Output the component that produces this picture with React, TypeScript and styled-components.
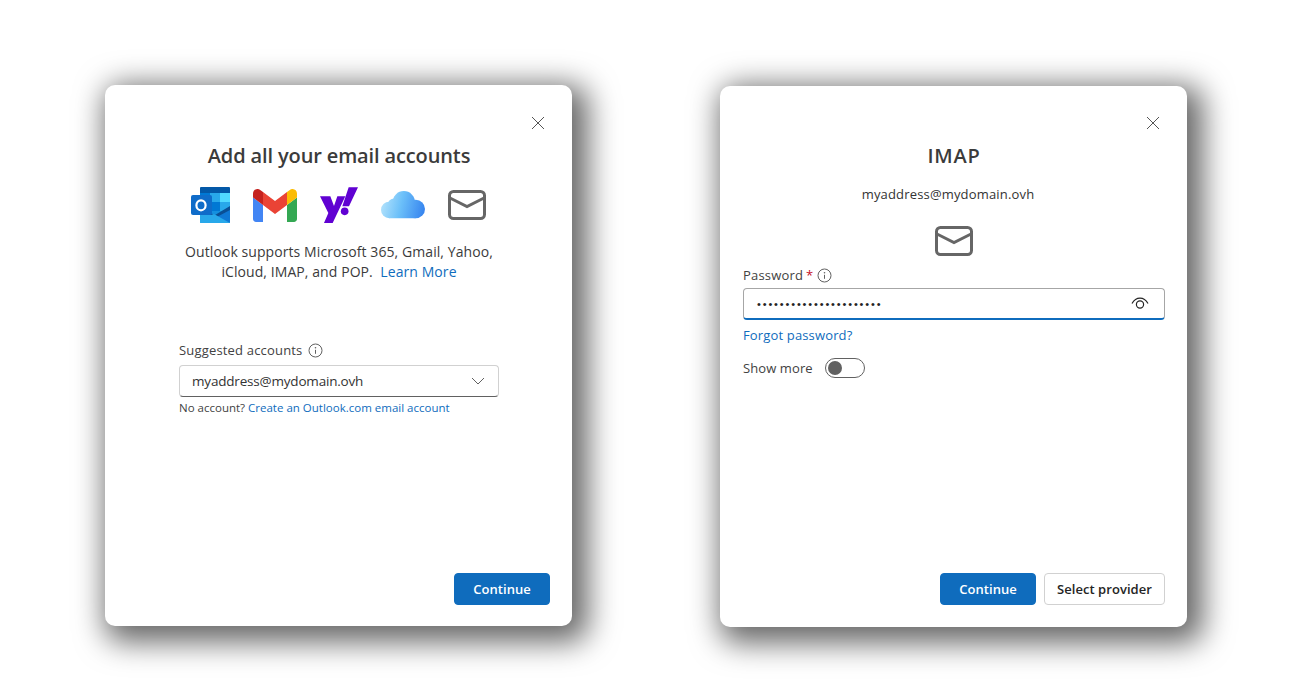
import styled, { createGlobalStyle } from 'styled-components'

const GlobalStyle = createGlobalStyle`
  html, body {
    margin: 0;
    padding: 0;
    background: #fff;
  }
  body {
    font-family: 'Open Sans', 'Noto Sans', sans-serif;
    color: #242424;
  }
`

const Page = styled.div`
  width: 1300px;
  height: 700px;
  overflow: hidden;
  display: flex;
  align-items: flex-start;
  gap: 148px;
  padding: 85px 0 0 105px;
  box-sizing: border-box;
`

const Card = styled.section<{ $offset?: number }>`
  position: relative;
  width: 467px;
  height: 541px;
  margin-top: ${(p) => p.$offset ?? 0}px;
  padding: 56px 22px 21px 23px;
  box-sizing: border-box;
  display: flex;
  flex-direction: column;
  background: #fff;
  border-radius: 10px;
  box-shadow: 8px 8px 30px 8px rgba(0, 0, 0, 0.6);
`

const CloseButton = styled.button<{ $top?: number }>`
  position: absolute;
  top: ${(p) => p.$top ?? 31}px;
  right: 27px;
  width: 14px;
  height: 14px;
  padding: 0;
  border: 0;
  background: none;
  display: flex;
  svg {
    display: block;
  }
`

const Title = styled.h2<{ $nudge?: number; $tracking?: number }>`
  margin: ${(p) => p.$nudge ?? 0}px 0 0;
  font-size: 20px;
  line-height: 28px;
  font-weight: 600;
  color: #3b3b3b;
  text-align: center;
  letter-spacing: ${(p) => p.$tracking ?? -0.13}px;
`

const LogoRow = styled.div`
  margin: 17px 0 0 62px;
  height: 36px;
  display: flex;
  align-items: center;
  gap: 23px;
`

const Blurb = styled.p`
  margin: 19px 0 0;
  font-size: 14px;
  line-height: 20px;
  letter-spacing: 0.08px;
  color: #3b3b3b;
  text-align: center;
`

const Link = styled.a<{ $small?: boolean }>`
  color: #0f6cbd;
  text-decoration: none;
  font-size: ${(p) => (p.$small ? '11.5px' : 'inherit')};
`

const Form = styled.div`
  width: 320px;
  margin: 58px 0 0 51px;
`

const LabelRow = styled.div<{ $gap?: number }>`
  display: flex;
  align-items: center;
  gap: ${(p) => p.$gap ?? 5}px;
  height: 20px;
  font-size: 13px;
  letter-spacing: 0.18px;
  color: #424242;
`

const Required = styled.span`
  color: #c50f1f;
  margin-right: 1px;
`

const SelectBox = styled.div`
  margin-top: 5px;
  height: 32px;
  padding: 0 13px 0 12px;
  box-sizing: border-box;
  display: flex;
  align-items: center;
  justify-content: space-between;
  border: 1px solid #d1d1d1;
  border-bottom-color: #616161;
  border-radius: 4px;
  font-size: 13.5px;
  letter-spacing: -0.19px;
  color: #333;
`

const Hint = styled.div`
  margin-top: 4px;
  font-size: 11.5px;
  line-height: 14px;
  color: #424242;
`

const Address = styled.div`
  margin-top: 14px;
  padding-right: 12px;
  font-size: 13px;
  line-height: 20px;
  letter-spacing: 0.17px;
  color: #333;
  text-align: center;
`

const CentredIcon = styled.div`
  margin-top: 22px;
  display: flex;
  justify-content: center;
  svg {
    display: block;
  }
`

const Field = styled.div`
  margin-top: 9px;
`

const PasswordBox = styled.div`
  margin-top: 3px;
  height: 32px;
  padding: 0 15px 0 13px;
  box-sizing: border-box;
  display: flex;
  align-items: center;
  justify-content: space-between;
  border: 1px solid #a6a6a6;
  border-bottom: 2px solid #0f6cbd;
  border-radius: 4px;
`

const PasswordDots = styled.span`
  font-family: 'Liberation Sans', sans-serif;
  font-size: 11px;
  letter-spacing: 1.85px;
  color: #242424;
`

const ForgotRow = styled.div`
  margin-top: 5px;
  font-size: 13px;
  line-height: 20px;
  letter-spacing: 0.15px;
`

const ToggleRow = styled.div`
  margin-top: 13px;
  display: flex;
  align-items: center;
  gap: 12px;
  font-size: 13px;
  letter-spacing: 0.1px;
  color: #424242;
`

const Toggle = styled.div`
  width: 40px;
  height: 20px;
  box-sizing: border-box;
  padding: 2px;
  border: 1px solid #616161;
  border-radius: 10px;
  display: flex;
  align-items: center;
`

const Knob = styled.div`
  width: 14px;
  height: 14px;
  border-radius: 50%;
  background: #616161;
`

const Footer = styled.div<{ $lift?: number }>`
  margin-top: auto;
  margin-bottom: ${(p) => p.$lift ?? 0}px;
  display: flex;
  justify-content: flex-end;
  gap: 8px;
`

const Button = styled.button<{ $primary?: boolean }>`
  height: 32px;
  padding: 0 0 1px;
  width: ${(p) => (p.$primary ? '96px' : '121px')};
  box-sizing: border-box;
  border: 1px solid ${(p) => (p.$primary ? '#0f6cbd' : '#d1d1d1')};
  border-radius: 4px;
  background: ${(p) => (p.$primary ? '#0f6cbd' : '#fff')};
  color: ${(p) => (p.$primary ? '#fff' : '#242424')};
  font-family: inherit;
  font-size: 13px;
  font-weight: 600;
  letter-spacing: 0.05px;
`

const CloseIcon = () => (
  <svg width="14" height="14" viewBox="0 0 14 14">
    <path d="M1 1l12 12M13 1L1 13" stroke="#555" strokeWidth="1" fill="none" />
  </svg>
)

const InfoIcon = () => (
  <svg width="15" height="15" viewBox="0 0 15 15">
    <circle cx="7.5" cy="7.5" r="6.5" stroke="#616161" fill="none" />
    <path d="M7.5 6.8v4" stroke="#616161" fill="none" />
    <circle cx="7.5" cy="4.7" r="0.8" fill="#616161" />
  </svg>
)

const ChevronIcon = () => (
  <svg width="14" height="8" viewBox="0 0 14 8">
    <path d="M1 1l6 6 6-6" stroke="#616161" fill="none" />
  </svg>
)

const EyeIcon = () => (
  <svg width="18" height="13" viewBox="0 0 18 13">
    <path d="M1 6.500C3 3 5.500 1.200 9 1.200s6 1.800 8 5.300" stroke="#242424" strokeWidth="1.2" fill="none" />
    <circle cx="9" cy="7.500" r="3.600" stroke="#242424" strokeWidth="1.2" fill="none" />
  </svg>
)

const OutlookLogo = () => (
  <svg width="40" height="36" viewBox="0 0 40 36">
    <rect x="10" y="20" width="30" height="16" rx="1" fill="#1490df" />
    <path d="M11 0h28a1 1 0 0 1 1 1v5H10V1a1 1 0 0 1 1-1z" fill="#0358a7" />
    <rect x="10" y="6" width="10" height="9" fill="#0078d4" />
    <rect x="20" y="6" width="10" height="9" fill="#28a8ea" />
    <rect x="30" y="6" width="10" height="9" fill="#50d9ff" />
    <rect x="10" y="15" width="10" height="9" fill="#0364b8" />
    <rect x="20" y="15" width="10" height="9" fill="#0078d4" />
    <rect x="30" y="15" width="10" height="9" fill="#28a8ea" />
    <path d="M16 24l9 4 15-9v5L25 33 16 28z" fill="#0a4f94" />
    <path d="M40 23v12a1 1 0 0 1-1 1H25V31z" fill="#0f78d4" />
    <path d="M11 36a1 1 0 0 1-1-1v-7h11l3-1 16 9z" fill="#28a8ea" />
    <rect x="1" y="8" width="21" height="20" rx="2" fill="#0f6cc9" />
    <ellipse cx="11" cy="18.300" rx="4.600" ry="5" fill="none" stroke="#fff" strokeWidth="2.200" />
  </svg>
)

const GmailLogo = () => (
  <svg width="44" height="33" viewBox="52 42 88 66">
    <path fill="#4285f4" d="M58 108h14V74L52 59v43c0 3.32 2.69 6 6 6" />
    <path fill="#34a853" d="M120 108h14c3.32 0 6-2.69 6-6V59l-20 15" />
    <path fill="#fbbc04" d="M120 48v26l20-15v-8c0-7.42-8.47-11.65-14.4-7.2" />
    <path fill="#ea4335" d="M72 74V48l24 18 24-18v26L96 92" />
    <path fill="#c5221f" d="M52 51v8l20 15V48l-5.6-4.2c-5.94-4.45-14.4-.22-14.4 7.2" />
  </svg>
)

const YahooLogo = () => (
  <svg width="38" height="36" viewBox="30 20 114 108">
    <path
      fill="#6001d2"
      d="M30 48h31l11 29 10-29h24l-38 80H42l13-30zM116 21h28l-27 57H97z"
    />
    <circle cx="104" cy="93" r="11.500" fill="#6001d2" />
  </svg>
)

const ICloudLogo = () => (
  <svg width="44" height="28" viewBox="212 30 133 84">
    <defs>
      <linearGradient id="cloudFill" x1="212" y1="60" x2="345" y2="90" gradientUnits="userSpaceOnUse">
        <stop offset="0" stopColor="#b4e3fc" />
        <stop offset="0.45" stopColor="#6cc0f9" />
        <stop offset="1" stopColor="#3583ef" />
      </linearGradient>
    </defs>
    <g fill="url(#cloudFill)">
      <circle cx="237" cy="87" r="25" />
      <circle cx="252" cy="72" r="20" />
      <circle cx="281" cy="64" r="34" />
      <circle cx="317" cy="84" r="28" />
      <rect x="237" y="70" width="80" height="42" />
    </g>
  </svg>
)

const MailIcon = () => (
  <svg width="38" height="30" viewBox="0 0 38 30">
    <rect x="1.500" y="1.500" width="35" height="27" rx="4" fill="none" stroke="#666" strokeWidth="3" />
    <path d="M2 8l17 8.500L36 8" fill="none" stroke="#666" strokeWidth="3" />
  </svg>
)

export default function App() {
  return (
    <Page>
      <GlobalStyle />
      <Card>
        <CloseButton>
          <CloseIcon />
        </CloseButton>
        <Title $nudge={1}>Add all your email accounts</Title>
        <LogoRow>
          <OutlookLogo />
          <GmailLogo />
          <YahooLogo />
          <ICloudLogo />
          <MailIcon />
        </LogoRow>
        <Blurb>
          Outlook supports Microsoft 365, Gmail, Yahoo,
          <br />
          iCloud, IMAP, and POP.&nbsp; <Link href="#">Learn More</Link>
        </Blurb>
        <Form>
          <LabelRow>
            Suggested accounts <InfoIcon />
          </LabelRow>
          <SelectBox>
            myaddress@mydomain.ovh
            <ChevronIcon />
          </SelectBox>
          <Hint>
            No account? <Link href="#" $small>Create an Outlook.com email account</Link>
          </Hint>
        </Form>
        <Footer>
          <Button $primary>Continue</Button>
        </Footer>
      </Card>
      <Card $offset={1}>
        <CloseButton $top={30}>
          <CloseIcon />
        </CloseButton>
        <Title $tracking={0.8}>IMAP</Title>
        <Address>myaddress@mydomain.ovh</Address>
        <CentredIcon>
          <MailIcon />
        </CentredIcon>
        <Field>
          <LabelRow $gap={3}>
            <span>Password</span>
            <Required>*</Required>
            <InfoIcon />
          </LabelRow>
          <PasswordBox>
            <PasswordDots>••••••••••••••••••••••</PasswordDots>
            <EyeIcon />
          </PasswordBox>
        </Field>
        <ForgotRow>
          <Link href="#">Forgot password?</Link>
        </ForgotRow>
        <ToggleRow>
          Show more
          <Toggle>
            <Knob />
          </Toggle>
        </ToggleRow>
        <Footer $lift={1}>
          <Button $primary>Continue</Button>
          <Button>Select provider</Button>
        </Footer>
      </Card>
    </Page>
  )
}
